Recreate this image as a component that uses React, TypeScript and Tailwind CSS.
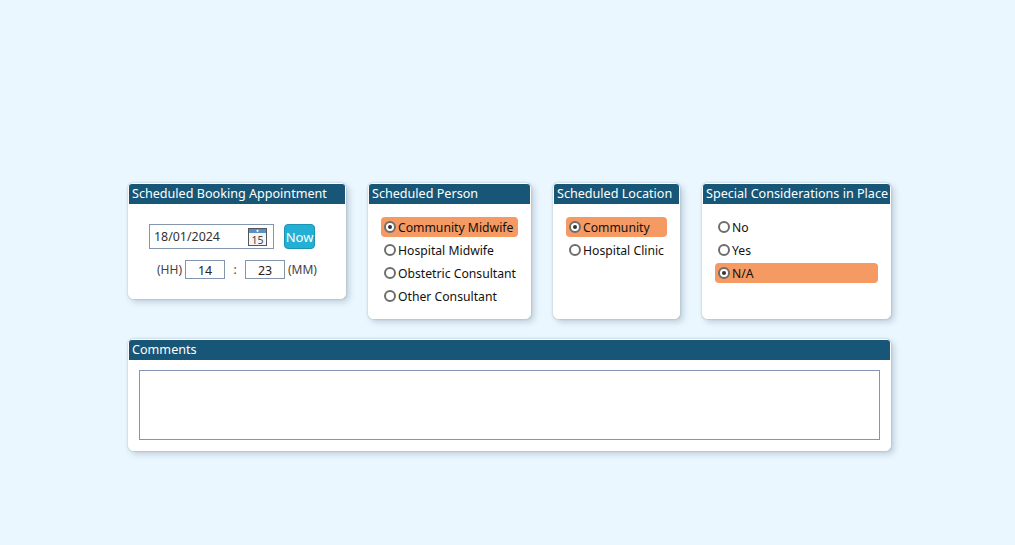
import React from 'react';

const Panel = ({ title, className, children }: { title: string; className: string; children: React.ReactNode }) => (
    <div className={`bg-white border border-white rounded-[5px] shadow-[0_0_2px_rgba(90,110,125,0.45),3px_3px_6px_rgba(90,110,125,0.3)] ${className}`}>
        <div className="h-5 bg-[#175676] rounded-t-[3px] pl-[3px] text-white text-[12.6px] leading-[19px] whitespace-nowrap">
            {title}
        </div>
        {children}
    </div>
);

const Radio = ({ label, checked }: { label: string; checked?: boolean }) => (
    <div className={`h-5 flex items-center pl-[3px] rounded-[4px] text-[12.2px] text-[#111] whitespace-nowrap ${checked ? 'bg-[#f59a63]' : ''}`}>
        <span className="w-3 h-3 mr-[2px] shrink-0 rounded-full border-2 border-[#6d6d6d] bg-white flex items-center justify-center">
            {checked && <span className="w-1 h-1 rounded-full bg-[#333]" />}
        </span>
        <span className="pt-[2px]">{label}</span>
    </div>
);

const RadioList = ({ options, selected, className }: { options: string[]; selected: string; className: string }) => (
    <div className={`flex flex-col gap-[3px] pt-[13px] ${className}`}>
        {options.map((option) => (
            <Radio key={option} label={option} checked={option === selected} />
        ))}
    </div>
);

const CalendarIcon = () => (
    <svg width="19" height="18" viewBox="0 0 19 18">
        <rect x="0.5" y="0.5" width="18" height="17" fill="#f4f4f4" stroke="#555" />
        <rect x="1" y="1" width="17" height="4" fill="#5b8fc7" />
        <circle cx="9.5" cy="2.8" r="1.1" fill="#fff" />
        <text x="9.5" y="15.5" textAnchor="middle" fontSize="10.5" fill="#444" fontFamily="'Noto Sans', sans-serif">15</text>
    </svg>
);

const TimeBox = ({ value }: { value: string }) => (
    <div className="w-10 h-[19px] border border-[#8496ae] text-center text-[12.4px] leading-[19px] text-[#222]">{value}</div>
);

const App = () => {
    return (
        <div className="w-[1015px] h-[545px] bg-[#eaf7ff] pt-[183px] pl-[128px] font-['Noto_Sans',sans-serif] overflow-hidden">
            <div className="flex items-start gap-[22px]">
                <Panel title="Scheduled Booking Appointment" className="w-[218px] h-[116px]">
                    <div className="flex items-center pt-[20px] pl-[20px]">
                        <div className="w-[125px] h-[25px] border border-[#8496ae] flex items-center justify-between pl-1 pr-[6px] text-[12.4px] text-[#333]">
                            <span className="pt-[2px]">18/01/2024</span>
                            <CalendarIcon />
                        </div>
                        <button className="ml-[10px] w-[31px] h-[25px] pt-[2px] rounded-[4px] bg-[#22b0d4] border border-[#1b93b3] text-white text-[13px] leading-none">
                            Now
                        </button>
                    </div>
                    <div className="flex items-center pt-[10px] pl-[28px] text-[12px] text-[#444]">
                        <span className="mr-[3px] pt-[2px]">(HH)</span>
                        <TimeBox value="14" />
                        <span className="w-5 text-center pt-[2px]">:</span>
                        <TimeBox value="23" />
                        <span className="ml-[3px] pt-[2px]">(MM)</span>
                    </div>
                </Panel>
                <Panel title="Scheduled Person" className="w-[163px] h-[136px]">
                    <RadioList
                        className="px-[12px]"
                        options={['Community Midwife', 'Hospital Midwife', 'Obstetric Consultant', 'Other Consultant']}
                        selected="Community Midwife"
                    />
                </Panel>
                <Panel title="Scheduled Location" className="w-[127px] h-[136px]">
                    <RadioList
                        className="pl-[12px] pr-[12px]"
                        options={['Community', 'Hospital Clinic']}
                        selected="Community"
                    />
                </Panel>
                <Panel title="Special Considerations in Place" className="w-[189px] h-[136px]">
                    <RadioList
                        className="pl-[12px] pr-[12px]"
                        options={['No', 'Yes', 'N/A']}
                        selected="N/A"
                    />
                </Panel>
            </div>
            <Panel title="Comments" className="w-[763px] h-[112px] mt-[20px]">
                <div className="mt-[10px] mx-[10px] h-[70px] border border-[#8496ae]" />
            </Panel>
        </div>
    );
};

export default App;
